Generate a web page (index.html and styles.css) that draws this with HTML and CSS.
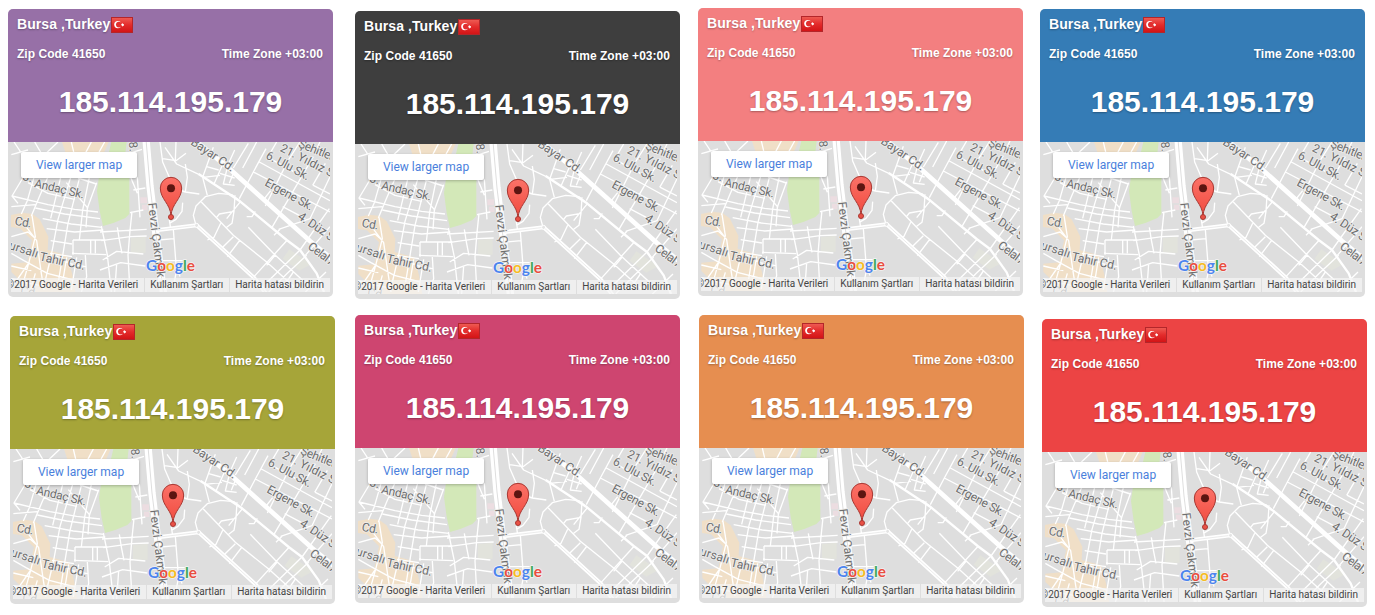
FILE: index.html
```html
<!DOCTYPE html>
<html lang="en">
<head>
<meta charset="utf-8">
<title>IP location widgets</title>
<link rel="stylesheet" href="styles.css">
</head>
<body>
<main class="board">
  <div class="row">
    <article class="card purple"></article>
    <article class="card dark"></article>
    <article class="card coral"></article>
    <article class="card blue"></article>
  </div>
  <div class="row">
    <article class="card olive"></article>
    <article class="card pink"></article>
    <article class="card orange"></article>
    <article class="card red"></article>
  </div>
</main>

<template id="widget">
  <header class="info">
    <div class="place"><span>Bursa ,Turkey</span><svg class="flag" viewBox="0 0 22 16"><rect width="22" height="16" fill="#b3262a"/><rect x="1" y="1" width="20" height="14" fill="url(#flagfill)"/><circle cx="6.8" cy="7.6" r="3.6" fill="#fff"/><circle cx="7.9" cy="7.6" r="2.9" fill="#e22f2f"/><path d="M9.8 7.6l1.1-.3.3-1.2.8 1 1.2-.2-.7 1 .6 1-1.2-.2-.8 1-.2-1.2z" fill="#fff"/></svg></div>
    <div class="meta"><span>Zip Code 41650</span><span>Time Zone +03:00</span></div>
    <div class="ip">185.114.195.179</div>
  </header>
  <div class="map">
    <svg class="streets" viewBox="33 18 957 450">
      <!-- built-up areas, parks -->
      <g fill="#f0dfc7">
        <path d="M186 18h140l-15 34-40 12h-70z"/>
        <path d="M33 237l34-7 30 4 22 16 26 52-2 40 58 16 15 54 10 56h-130l-62-60v-25l48-4 14-66-36-36-27-4z"/>
      </g>
      <g fill="#d3e8b8"><path d="M334 18h46l-4 34h-50zM300 100h88v134l-12 12-36 15-31 9-10-45-8-60z"/></g>
      <g fill="#e2e3dc"><path d="M393 306l44-4v48h-44zM868 340l66 44-36 20-50-36z"/></g>
      <path fill="#ecdde1" d="M421 184h20v18h-20zM426 206h16v16h-16z"/>
      <!-- west side streets -->
      <g class="minor" transform="translate(24 12)">
        <path d="M18 6L42 42M10 44L60 30M80 6L100 40M112 42L150 6M190 6l8 34M250 6l-18 34M290 6l-20 36"/>
        <path d="M48 108L12 168 30 190M10 200L82 194M12 168L120 194 200 208 270 216M78 112L58 182 40 222M120 110L94 170 70 228M60 128L120 160 200 178M210 114l55 18"/>
        <path d="M158 112L128 235M188 112L150 238 130 345 112 420M215 112L180 250 152 420M244 112L224 210 214 300M266 128L238 205 234 262M175 128L240 205"/>
        <path d="M82 204L170 222 276 236M104 236L190 252 282 262M116 266L200 276 286 270M195 300H292M192 340L295 344M195 300V345M248 300v40M262 300v40M128 302L192 312M126 340L192 350"/>
        <path d="M72 226L82 290 62 370 40 448M56 262L86 302 100 400 108 450M10 290L60 276 78 292M10 340L48 362 118 400 196 420M10 378L70 392M140 345L190 372 232 380M176 352L160 450M206 352L190 450M232 345L236 410 220 456M60 372L20 430M10 416L60 430 120 440M82 400L66 456"/>
      </g>
      <!-- centre streets -->
      <g class="minor" transform="translate(300 12)">
        <path d="M88 40L126 28M112 112L120 232M100 150L136 144M92 112L112 160M90 218L130 210M96 215L90 272 84 345M4 258L22 345 34 456M0 276L140 268M4 302L90 290 140 288M52 262L58 300 66 340M8 360L50 334 130 342M0 390L62 368 136 378M84 345L90 456M50 372L44 456"/>
        <path d="M180 6L188 66 208 112M228 6L226 60M188 56L228 62 258 40M195 22L230 72 298 104M256 72L262 112 256 156 238 150M256 156L298 162M248 188L246 214 228 238 208 250M208 240l4 26M220 268L228 372 240 410M180 362H248M176 300l46-4M170 430l60-4M232 380l-12 60"/>
      </g>
      <!-- east side streets -->
      <g class="minor" transform="translate(600 12)">
        <path d="M-4 102L120 184 260 300 300 330 350 400 372 456" stroke-width="7"/>
        <path d="M40 22L8 112 22 166M74 60L42 132M20 80L56 90M10 112L60 106M104 30L84 74 70 132 104 136M60 100L104 114M145 10L100 84M100 100L88 130M170 6L128 84M198 26L160 96 118 176M160 96L390 216M178 66L390 182M210 56L280 94M300 6L264 62 196 198M340 50L300 118 216 262M376 70L338 136M390 110L330 236 236 268M248 200L316 236M340 136L390 162M190 180L212 152M230 6L210 40M360 6L348 30M388 206L300 330M390 260L316 346"/>
        <path d="M-12 256L-20 226-12 198 16 170 56 160 96 164 120 184M4 186L100 286 200 366 282 440M105 166L102 214 58 222 50 232M102 214L96 250 80 262M62 250L42 292 22 300M100 290L68 322M122 184L80 236M140 230L156 230 166 214M145 262L220 340 320 432M262 300L162 410M300 330L198 430M225 346L200 376M320 346L262 400 206 456M378 396L316 456M280 396L250 440M120 300L82 350M240 268L222 286"/>
      </g>
      <!-- avenues -->
      <g fill="none" stroke-linecap="round" stroke-linejoin="round">
        <path d="M438 10L450 150 466 280 491 475" stroke="#fff" stroke-width="22"/>
        <path d="M438 10L450 150 466 280 491 475" stroke="#dedede" stroke-width="3"/>
        <path d="M474 282L590 268 762 425 800 475" stroke="#fff" stroke-width="12"/>
        <path d="M474 282L590 268 762 425 800 475" stroke="#e1e1e1" stroke-width="2"/>
        <circle cx="590" cy="268" r="6" fill="#e4e4e4" stroke="#fff" stroke-width="3"/>
        <path d="M582 10L690 100 930 315 1000 373" stroke="#fff" stroke-width="14"/>
      </g>
      <!-- street names -->
      <g class="names">
        <text transform="translate(66 132) rotate(12)">3. </text>
        <text transform="translate(101 153) rotate(13)" textLength="153">Andaç Sk.</text>
        <text transform="translate(43 266) rotate(10)" textLength="50">Cd.</text>
        <text transform="translate(25 338) rotate(18)" textLength="90">ursalı</text>
        <text transform="translate(117 373) rotate(12)" textLength="138">Tahir Cd.</text>
        <text transform="translate(570 24) rotate(34)" textLength="150">Bayar Cd.</text>
        <text transform="translate(444 202) rotate(83)" textLength="258">Fevzi Çakmak C</text>
        <text transform="translate(384 -2) rotate(84)">18.</text>
        <text transform="translate(893 32) rotate(22)" textLength="112">Şehitler</text>
        <text transform="translate(838 44) rotate(27)" textLength="176">21. Yıldız S</text>
        <text transform="translate(795 66) rotate(28)" textLength="143">6. Ulu Sk.</text>
        <text transform="translate(792 147) rotate(29)" textLength="160">Ergene Sk.</text>
        <text transform="translate(891 247) rotate(34)" textLength="124">4. Düz S</text>
        <text transform="translate(921 336) rotate(37)" textLength="100">Celal A</text>
        <text transform="translate(60 475) rotate(8)">Cd.</text>
      </g>
      <!-- location pin -->
      <path d="M513 240c-2-38-32-50-32-84a32 32 0 0 1 64 0c0 34-30 46-32 84z" fill="url(#pinfill)" stroke="#a83832" stroke-width="3"/>
      <circle cx="513" cy="157" r="12" fill="#5c1511"/>
      <circle cx="513" cy="243" r="7.5" fill="#ea5146" stroke="#a83832" stroke-width="3"/>
      <!-- provider wordmark -->
      <text class="brand" x="438" y="405" textLength="147" lengthAdjust="spacingAndGlyphs"><tspan fill="#4c84ee">G</tspan><tspan fill="#e94d40">o</tspan><tspan fill="#f6bc24">o</tspan><tspan fill="#4c84ee">g</tspan><tspan fill="#3faa59">l</tspan><tspan fill="#e94d40">e</tspan></text>
    </svg>
    <a class="larger">View larger map</a>
    <div class="credits"><span>©2017 Google - Harita Verileri</span><span>Kullanım Şartları</span><span>Harita hatası bildirin</span></div>
  </div>
</template>

<svg class="defs" width="0" height="0">
  <linearGradient id="flagfill" x2="0" y2="1"><stop stop-color="#ee5a52"/><stop offset=".5" stop-color="#e32b2b"/><stop offset="1" stop-color="#d31416"/></linearGradient>
  <linearGradient id="pinfill" x2="0" y2="1"><stop stop-color="#fb7268"/><stop offset="1" stop-color="#f04a3e"/></linearGradient>
</svg>
<script src="script.js"></script>
</body>
</html>
```
FILE: styles.css
```css
body {
  margin: 0;
  background: #fff;
  font-family: "Liberation Sans", Arial, sans-serif;
}

.board {
  display: flex;
  flex-direction: column;
  gap: 16px;
  padding-top: 8px;
}

.row {
  display: flex;
  align-items: flex-start;
}

.card {
  flex: none;
  box-sizing: border-box;
  width: 325px;
  height: 288px;
  border-radius: 5px;
  overflow: hidden;
  background: #dedede;
}

.purple { margin: 1px 0 0 8px; --tone: #9770a7; }
.dark { margin: 3px 0 0 22px; --tone: #3e3e3e; }
.coral { margin: 0 0 0 18px; --tone: #f37f80; }
.blue { margin: 1px 0 0 17px; --tone: #357cb6; }
.olive { margin: 1px 0 0 10px; --tone: #a6a539; }
.pink { margin: 0 0 0 20px; --tone: #ce4570; }
.orange { margin: 0 0 0 19px; --tone: #e68e50; }
.red { margin: 4px 0 0 18px; --tone: #ec4444; }

.info {
  box-sizing: border-box;
  height: 133px;
  padding: 7px 10px 0 9px;
  background: var(--tone);
  color: #fff;
  font-weight: bold;
  text-shadow: 0 1px 2px rgba(0, 0, 0, .3);
}

.place {
  display: flex;
  gap: 1px;
  font-size: 14px;
  line-height: 16px;
  letter-spacing: .07px;
  white-space: nowrap;
}

.flag {
  width: 22px;
  height: 16px;
  margin-top: 1px;
}

.meta {
  display: flex;
  justify-content: space-between;
  margin-top: 14px;
  font-size: 12px;
  line-height: 14px;
  letter-spacing: .03px;
}

.ip {
  margin-top: 23px;
  padding-left: 1px;
  font-size: 30px;
  line-height: 36px;
  text-align: center;
}

.map {
  position: relative;
  width: 319px;
  height: 150px;
  margin-left: 3px;
  overflow: hidden;
}

.streets {
  display: block;
  width: 319px;
  height: 150px;
}

.minor {
  fill: none;
  stroke: #fff;
  stroke-width: 4;
  stroke-linejoin: round;
}

.names {
  font: 36px Roboto, sans-serif;
  fill: #6e6e6e;
  stroke: #ececec;
  stroke-width: 5px;
  stroke-linejoin: round;
  paint-order: stroke;
}

.brand {
  font: bold 44px Lato, sans-serif;
  stroke: #f4f4f4;
  stroke-width: 4px;
  paint-order: stroke;
}

.larger {
  position: absolute;
  left: 10px;
  top: 10px;
  width: 116px;
  border-radius: 2px;
  background: #fff;
  box-shadow: 0 1px 3px rgba(0, 0, 0, .25);
  color: #4a7fdc;
  font: 12px/26px Roboto, sans-serif;
  text-align: center;
}

.credits {
  position: absolute;
  right: 0;
  bottom: 0;
  display: flex;
  color: #444;
  font: 10px/14px Roboto, sans-serif;
  letter-spacing: -.02px;
  white-space: nowrap;
}

.credits span {
  padding: 0 6px 0 5px;
  background: rgba(245, 245, 245, .72);
}

.credits span + span {
  border-left: 1px solid #dedede;
}

.defs {
  position: absolute;
}
```
FILE: script.js
```javascript
const widget = document.getElementById('widget');
document.querySelectorAll('.card').forEach(card => {
  card.append(widget.content.cloneNode(true));
});
```
